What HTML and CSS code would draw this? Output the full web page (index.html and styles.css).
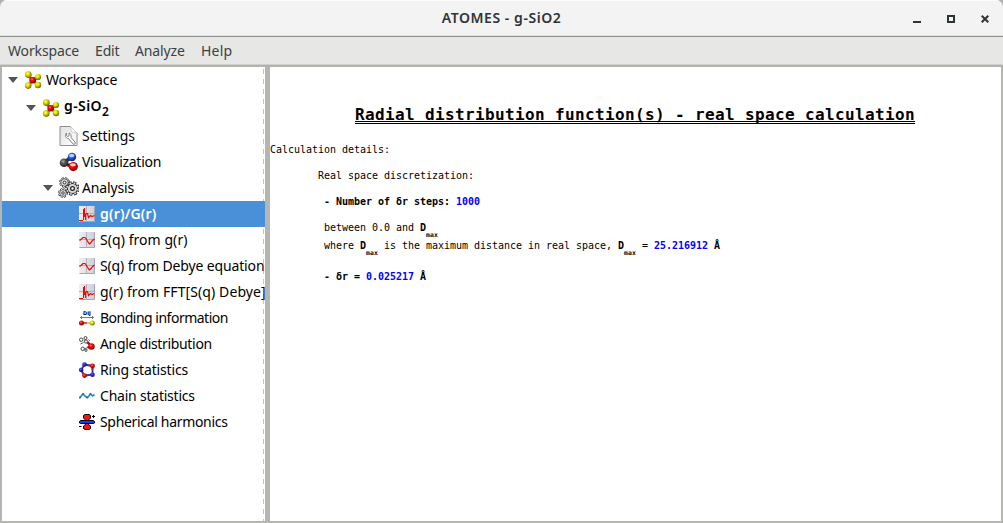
FILE: index.html
```html
<!DOCTYPE html>
<html lang="en">
<head>
<meta charset="utf-8">
<title>ATOMES - g-SiO2</title>
<link rel="stylesheet" href="styles.css">
</head>
<body>
<svg class="defs" width="0" height="0">
  <defs>
    <radialGradient id="yel" cx=".4" cy=".35" r=".65"><stop offset="0" stop-color="#ffff50"/><stop offset=".4" stop-color="#dede00"/><stop offset="1" stop-color="#6a6a00"/></radialGradient>
    <radialGradient id="red" cx=".4" cy=".35" r=".65"><stop offset="0" stop-color="#ff7a6a"/><stop offset=".4" stop-color="#e80c0c"/><stop offset="1" stop-color="#8a0000"/></radialGradient>
    <radialGradient id="blue" cx=".4" cy=".35" r=".65"><stop offset="0" stop-color="#a8c8ff"/><stop offset=".4" stop-color="#2860e8"/><stop offset="1" stop-color="#0a208a"/></radialGradient>
    <radialGradient id="navy" cx=".4" cy=".35" r=".65"><stop offset="0" stop-color="#7070ff"/><stop offset=".4" stop-color="#2a2ad8"/><stop offset="1" stop-color="#101080"/></radialGradient>
    <radialGradient id="gray" cx=".4" cy=".35" r=".65"><stop offset="0" stop-color="#aaa"/><stop offset=".4" stop-color="#555"/><stop offset="1" stop-color="#222"/></radialGradient>
    <linearGradient id="page" x2="1" y2="1"><stop offset="0" stop-color="#dfe1de"/><stop offset="1" stop-color="#fff"/></linearGradient>
    <linearGradient id="plot"><stop offset="0" stop-color="#f0f0f2"/><stop offset="1" stop-color="#cdcdd8"/></linearGradient>
    <symbol id="molecule" viewBox="0 0 18 18">
      <path d="M4 4.500 8.500 9 14 6.500M4.500 15 8.500 9 14 14" fill="none" stroke="#90900c" stroke-width="2.800"/>
      <path d="M6.500 7 8.500 9 11.500 7.600M7 11 8.500 9 11 11.200" fill="none" stroke="#a80808" stroke-width="3"/>
      <circle cx="8.700" cy="9.200" r="3.300" fill="url(#red)"/>
      <circle cx="4.300" cy="3.600" r="3.400" fill="url(#yel)"/><circle cx="14" cy="6" r="3.100" fill="url(#yel)"/>
      <circle cx="4.200" cy="14.600" r="3.300" fill="url(#yel)"/><circle cx="14" cy="14" r="3.200" fill="url(#yel)"/>
    </symbol>
    <symbol id="grid" viewBox="0 0 16 16">
      <path d="M0 0h16v16H0z" fill="url(#plot)"/><path d="M7.500 0v16M0 7.500h16" stroke="#b2b2bc"/>
      <path d="M.5 15.500h15V.5" fill="none" stroke="#a6a6b2"/>
    </symbol>
    <symbol id="gr" viewBox="0 0 16 16">
      <use href="#grid"/><path d="M0 14.500H4M6.500 14V8.500L7.500 7.500H8.500L9.500 11.500 11.500 9.500 13 10.500 15.500 9.500" fill="none" stroke="red" stroke-width="1.200"/><path d="M4 3h1V2h1v6h1v6H6v-3H5v3H4z" fill="red"/>
    </symbol>
    <symbol id="sq" viewBox="0 0 16 16">
      <use href="#grid"/><path d="M.5 8.500 2.500 7 4 5.500H6L7.500 7.500 9.500 11 10.500 12 12 10.500 13.500 8.500 15.500 7" fill="none" stroke="red" stroke-width="1.200"/>
    </symbol>
    <symbol id="gear" viewBox="-6 -6 12 12">
      <circle r="4.500" fill="none" stroke="#222" stroke-width="2.600" stroke-dasharray="2.300 1.234"/>
      <circle r="4.100" fill="#d8d8d8" stroke="#333" stroke-width=".9"/><circle r="4.500" fill="none" stroke="#d8d8d8" stroke-width="1.400" stroke-dasharray="1.300 2.234" stroke-dashoffset="-.5"/>
      <circle r="1.500" fill="#fff" stroke="#222" stroke-width="1"/>
    </symbol>
  </defs>
</svg>

<div class="window">
  <header class="titlebar">
    <span class="side"></span>
    <h1 class="title">ATOMES - g-SiO2</h1>
    <div class="controls">
      <svg width="8" height="8"><path d="M0 6h8v2H0z" fill="#2e3436"/></svg>
      <svg width="8" height="8"><path d="M1 1h6v6H1z" fill="none" stroke="#2e3436" stroke-width="2"/></svg>
      <svg width="8" height="8"><path d="M.7.700 7.300 7.300M7.300.700.700 7.300" stroke="#2e3436" stroke-width="2"/></svg>
    </div>
  </header>

  <nav class="menubar">
    <span class="m-work">Workspace</span><span class="m-edit">Edit</span><span class="m-analyze">Analyze</span><span class="m-help">Help</span>
  </nav>

  <main class="panes">
    <aside class="tree">
      <div class="row level0"><svg class="arrow" width="10" height="6"><path d="M0 0h10L5 6z"/></svg><svg class="icon" width="18" height="18"><use href="#molecule"/></svg><span class="label t-work">Workspace</span></div>
      <div class="row level1"><svg class="arrow" width="10" height="6"><path d="M0 0h10L5 6z"/></svg><svg class="icon" width="18" height="18"><use href="#molecule"/></svg><span class="label t-sio">g-SiO<span class="low">2</span></span></div>
      <div class="row level2"><svg class="icon" width="20" height="22" viewBox="0 0 20 22">
        <path d="M1.500 1.500H12L18.500 8V20.500H1.500z" fill="url(#page)" stroke="#8e908c"/><path d="M12 1.500 13 7 18.500 8" fill="#fff" stroke="#c4c4c4" stroke-width=".8"/>
        <path d="M8 8C6 10 7 13.500 10 13.500L14.500 19C16 20 17.500 18.500 16.500 17L12.500 12.500C13 10 12 8.500 10.500 8V11L9 11.500 8 10.500z" fill="#fff" stroke="#858585" stroke-width="1"/>
      </svg><span class="label t-set">Settings</span></div>
      <div class="row level2"><svg class="icon" width="20" height="20" viewBox="0 0 20 20">
        <path d="M5 11 13 5M5 11 14.500 15" stroke="#333" stroke-width="3.500"/><path d="M10 7 13 5" stroke="#184ad0" stroke-width="3.500"/><path d="M10 13 14 15" stroke="#b00" stroke-width="3.500"/>
        <circle cx="5.500" cy="10.800" r="4.300" fill="url(#gray)"/><circle cx="13.500" cy="5" r="4.200" fill="url(#blue)"/><circle cx="14.800" cy="14.600" r="4.600" fill="url(#red)"/><ellipse cx="13.300" cy="3.600" rx="2.600" ry="1.500" fill="#bcd8ff"/><ellipse cx="14.500" cy="12.800" rx="2.900" ry="1.500" fill="#ffc8c4"/>
      </svg><span class="label t-vis">Visualization</span></div>
      <div class="row level2"><svg class="arrow" width="10" height="6"><path d="M0 0h10L5 6z"/></svg><svg class="icon" width="21" height="22" viewBox="0 0 21 22">
        <use href="#gear" x="1" y="0" width="11" height="11"/><use href="#gear" x="0" y="11" width="10" height="10"/><use href="#gear" x="7" y="4" width="15" height="15"/>
      </svg><span class="label t-ana">Analysis</span></div>
      <div class="row level3 selected"><svg class="icon" width="16" height="16"><use href="#gr"/></svg><span class="label t-gr">g(r)/G(r)</span></div>
      <div class="row level3"><svg class="icon" width="16" height="16"><use href="#sq"/></svg><span class="label t-sq">S(q) from g(r)</span></div>
      <div class="row level3"><svg class="icon" width="16" height="16"><use href="#sq"/></svg><span class="label t-debye">S(q) from Debye equation</span></div>
      <div class="row level3"><svg class="icon" width="16" height="16"><use href="#gr"/></svg><span class="label t-fft">g(r) from FFT[S(q) Debye]</span></div>
      <div class="row level3"><svg class="icon" width="16" height="16" viewBox="0 0 16 16">
        <text class="dij" x="8" y="4.500" text-anchor="middle">DIJ</text><path d="M1.500 7.500h13M3 6 1.500 7.500 3 9M13 6l1.500 1.500L13 9" fill="none" stroke="#555" stroke-width=".8"/>
        <path d="M3 13h5" stroke="#b00" stroke-width="1.300"/><path d="M8 13h5" stroke="#bb0" stroke-width="1.300"/><circle cx="2.500" cy="13" r="2.500" fill="url(#red)"/><circle cx="13.300" cy="13" r="2.500" fill="url(#yel)"/>
      </svg><span class="label t-bond">Bonding information</span></div>
      <div class="row level3"><svg class="icon" width="16" height="16" viewBox="0 0 16 16">
        <path d="M5 4.500 12 10M5 13l7-3" stroke="#888" stroke-width="1.300"/><path d="M8.500 6 12 10 8.500 11.700" fill="none" stroke="#c00" stroke-width="2.200"/>
        <g fill="#fff" stroke="#333" stroke-width=".9"><circle cx="2.200" cy="3.700" r="1.700"/><circle cx="6.500" cy="2" r="1.500"/><circle cx="7" cy="5.500" r="1.600"/><circle cx="3.700" cy="12.800" r="1.700"/><circle cx="7" cy="14.200" r="1.200"/></g>
        <path d="M1.500 8 4.500 6.500" stroke="#555"/><circle cx="12.500" cy="10.500" r="3.200" fill="url(#red)"/><path d="M9.500 3.500 11 5" stroke="#777"/>
      </svg><span class="label t-angle">Angle distribution</span></div>
      <div class="row level3"><svg class="icon" width="16" height="16" viewBox="0 0 16 16">
        <path d="M5.500 2.500 13.500 4 13.500 12.500 5.500 13.700 2 8z" fill="none" stroke="#3030a8" stroke-width="1.800"/>
        <path d="M9.500 3.200 13.500 4V8M3.500 10.500 5.500 13.700 9 13.200" fill="none" stroke="#c41a1a" stroke-width="1.800"/>
        <g fill="url(#navy)"><circle cx="5.500" cy="2.500" r="2.300"/><circle cx="2.200" cy="8" r="2.300"/><circle cx="13.500" cy="12.700" r="2.300"/></g><g fill="url(#red)"><circle cx="13.500" cy="4" r="2.400"/><circle cx="5.500" cy="13.600" r="2.300"/></g>
      </svg><span class="label t-ring">Ring statistics</span></div>
      <div class="row level3"><svg class="icon" width="16" height="16" viewBox="0 0 16 16">
        <path d="M.5 10 4 6 6.500 8.500 8.500 9.500 11.500 6 13.500 8 15.500 6.500" fill="none" stroke="#2a87b8" stroke-width="1.600"/><g fill="#1679ae"><circle cx="1" cy="9.500" r="1.100"/><circle cx="4.200" cy="6" r="1.100"/><circle cx="8.200" cy="9.500" r="1.100"/><circle cx="11.500" cy="6" r="1.100"/></g>
      </svg><span class="label t-chain">Chain statistics</span></div>
      <div class="row level3"><svg class="icon" width="16" height="16" viewBox="0 0 16 16">
        <path d="M6.500 6 4.500 4V1.500L6 .5h4l1.500 1V4L9.500 6v4.500l2 1.500v2.500l-1.500 1H6l-1.500-1V12l2-1.500z" fill="#ff1010" stroke="#000"/>
        <path d="M1.500 6.500h13l1 1v1.500l-1 .5h-13l-1-.5V7.500z" fill="#1739ff" stroke="#000"/><path d="M13 2.500h3M14.500 1v3M0 12.500h2.500" stroke="#000"/>
      </svg><span class="label t-sph">Spherical harmonics</span></div>
    </aside>

    <section class="report">
      <h2>Radial distribution function(s) - real space calculation</h2>
      <p class="details">Calculation details:</p>
      <p class="in1">Real space discretization:</p>
      <p class="in2 strong">- Number of δr steps: <span class="value">1000</span></p>
      <p class="in2 tight">between 0.0 and <b>D<span class="sub">max</span></b></p>
      <p class="in2 last">where <b>D<span class="sub">max</span></b> is the maximum distance in real space, <b>D<span class="sub">max</span></b> = <b><span class="value">25.216912</span> Å</b></p>
      <p class="in2 strong">- δr = <span class="value">0.025217</span> Å</p>
    </section>
  </main>
</div>
</body>
</html>
```
FILE: styles.css
```css
* { box-sizing: border-box; }
body { margin: 0; background: #b2b2ae; font-family: "Noto Sans", "Open Sans", sans-serif; font-size: 14px; color: #000; overflow: hidden; }
.defs { position: absolute; }
.window { width: 1003px; height: 523px; display: flex; flex-direction: column; border-radius: 7px 7px 0 0; overflow: hidden; }
.titlebar { flex: none; height: 37px; display: flex; align-items: center; background: #f3f3f3; border-top: 1px solid #fcfcfc; border-bottom: 1px solid #8e908c; box-shadow: inset 0 -1px #e0e0de; padding: 0 14px; }
.side { flex: 1; }
.title { margin: 0; font-size: 14px; font-weight: 600; line-height: 32px; padding-bottom: 2px; color: #2e3436; letter-spacing: .55px; }
.controls { flex: 1; display: flex; justify-content: flex-end; gap: 26px; }
.menubar { flex: none; height: 30px; display: flex; background: #e7e7e5; border-bottom: 2px solid #b2b2ae; box-shadow: inset 0 -1px #cfcfcb; padding-left: 8px; line-height: 27px; color: #3a4143; }
.menubar span { white-space: nowrap; letter-spacing: -.14px; }
.m-work { width: 87px; }
.m-edit { width: 40px; }
.m-analyze { width: 66px; }
.menubar .m-help { letter-spacing: .2px; }
.panes { flex: 1; min-height: 0; display: flex; gap: 5px; padding: 0 2px 2px; background: #b5b6b1; }
.tree { position: relative; flex: none; width: 263px; background: #fff; overflow: hidden; }
.tree::after { content: ""; position: absolute; top: 0; bottom: 0; left: 261px; width: 1px; background: repeating-linear-gradient(rgba(120,125,120,.45) 0 5px, transparent 5px 10px) 0 -8px / 1px 600px; }
.row { height: 26px; display: flex; align-items: center; white-space: nowrap; }
.icon { flex: none; }
.arrow { flex: none; margin-right: 6px; fill: #555; }
.label { line-height: 20px; }
.level0 { padding-left: 6px; }
.level0 .icon, .level1 .icon { margin-right: 4px; }
.level1 { height: 30px; padding-left: 24px; }
.level2 { padding-left: 56px; }
.level2 .icon { width: 21px; margin-right: 3px; }
.level2 .arrow { margin-left: -15px; margin-right: 5px; }
.level3 { padding-left: 77px; }
.level3 .icon { margin-right: 5px; }
.selected { background: #4a90d9; color: #fff; font-weight: 600; }
.t-work { letter-spacing: -.12px; }
.t-sio { font-weight: 600; line-height: 25px; padding-bottom: 5px; letter-spacing: .4px; }
.low { font-size: 12px; position: relative; top: 5px; line-height: 1; }
.t-set { letter-spacing: -.05px; }
.t-vis { letter-spacing: -.28px; }
.t-ana { letter-spacing: -.16px; }
.t-gr { letter-spacing: .2px; }
.t-sq { letter-spacing: .06px; }
.t-debye { letter-spacing: -.14px; }
.t-fft { letter-spacing: .1px; }
.t-bond { letter-spacing: -.5px; }
.t-angle { letter-spacing: -.33px; }
.t-ring { letter-spacing: -.15px; }
.t-chain { letter-spacing: -.22px; }
.t-sph { letter-spacing: -.32px; }
.dij { font: bold 5px "DejaVu Sans", sans-serif; fill: #000; }
.report { flex: 1; background: #fff; font-family: "DejaVu Sans Mono", monospace; font-size: 10px; letter-spacing: -.02px; line-height: 12px; padding-top: 38px; }
.report h2 { margin: 0 0 20px; padding-right: 1px; text-align: center; font-size: 16px; letter-spacing: .368px; line-height: 19px; text-decoration: underline double #000 1px; text-underline-offset: 1px; text-decoration-skip-ink: none; }
.report p { margin: 0 0 14px; white-space: pre; height: 12px; }
.report .in1 { padding-left: 48px; }
.report .in2 { padding-left: 54px; }
.strong { font-weight: bold; }
.report .tight { margin-bottom: 6px; }
.report .last { margin-bottom: 19px; }
.value { color: #00f; }
.sub { font-size: 6.4px; letter-spacing: .147px; position: relative; top: 6px; line-height: 1; }
```
